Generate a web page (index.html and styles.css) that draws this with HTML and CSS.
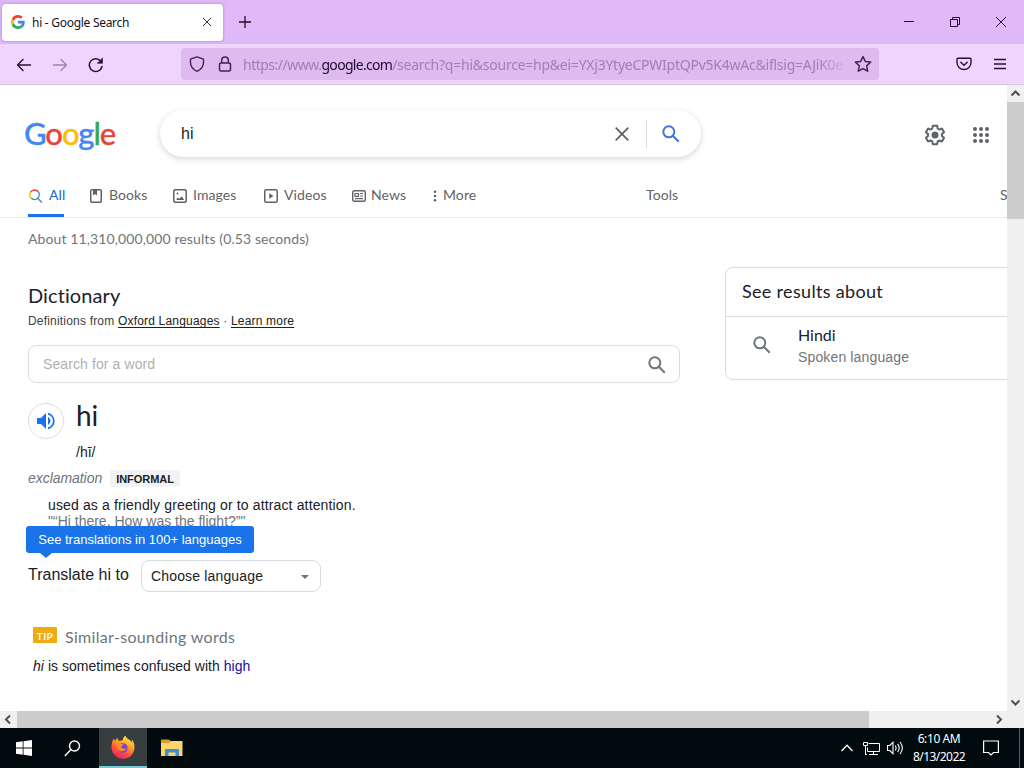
FILE: index.html
```html
<!DOCTYPE html>
<html lang="en">
<head>
<meta charset="utf-8">
<title>hi - Google Search</title>
<link rel="stylesheet" href="styles.css">
</head>
<body>
<div class="screen">
  <div class="tabbar">
    <div class="tab">
      <svg class="favicon" width="14" height="14" viewBox="0 0 48 48"><path fill="#EA4335" d="M24 9.500c3.500 0 6.700 1.200 9.200 3.600l6.900-6.900C35.900 2.400 30.500 0 24 0 14.600 0 6.500 5.400 2.600 13.200l8 6.200C12.400 13.700 17.700 9.500 24 9.500z"/><path fill="#4285F4" d="M47 24.500c0-1.600-.2-3.100-.4-4.500H24v9h12.900c-.6 3-2.200 5.500-4.700 7.200l7.700 6C44.400 38 47 31.800 47 24.500z"/><path fill="#FBBC05" d="M10.500 28.600A14.500 14.500 0 0 1 10.500 19.400l-8-6.200a24 24 0 0 0 0 21.600z"/><path fill="#34A853" d="M24 48c6.500 0 11.900-2.100 15.900-5.800l-7.700-6c-2.200 1.500-4.900 2.300-8.200 2.300-6.300 0-11.600-4.200-13.500-9.900l-8 6.200C6.500 42.600 14.600 48 24 48z"/></svg>
      <span class="tab-title">hi - Google Search</span>
      <svg class="tab-close" width="10" height="10" viewBox="0 0 10 10"><path d="M1 1l8 8M9 1l-8 8" stroke="#333" stroke-width="1"/></svg>
    </div>
    <svg class="new-tab" width="14" height="14" viewBox="0 0 14 14"><path d="M7 1v12M1 7h12" stroke="#1c0f26" stroke-width="1.300"/></svg>
    <div class="window-controls">
      <svg width="12" height="12" viewBox="0 0 12 12"><path d="M1 5.500h10" stroke="#2b0b3b"/></svg>
      <svg width="12" height="12" viewBox="0 0 12 12" fill="none" stroke="#2b0b3b"><path d="M1.500 3.500h7v7h-7zM3.500 3.500v-2h7v7h-2"/></svg>
      <svg width="12" height="12" viewBox="0 0 12 12"><path d="M1 1l10 10M11 1L1 11" stroke="#2b0b3b"/></svg>
    </div>
  </div>
  <div class="toolbar">
    <div class="nav-buttons">
      <svg width="16" height="16" viewBox="0 0 16 16" fill="none" stroke="#2b0d3e" stroke-width="1.400" stroke-linecap="round" stroke-linejoin="round"><path d="M14.500 8h-13M7 2.500L1.500 8 7 13.500"/></svg>
      <svg class="dim" width="16" height="16" viewBox="0 0 16 16" fill="none" stroke="#2b0d3e" stroke-width="1.400" stroke-linecap="round" stroke-linejoin="round"><path d="M1.500 8h13M9 2.500L14.500 8 9 13.500"/></svg>
      <svg width="16" height="16" viewBox="0 0 16 16" fill="none" stroke="#2b0d3e" stroke-width="1.500" stroke-linecap="round"><path d="M14 9.500A6.400 6.400 0 1 1 12.700 4"/><path d="M14.500 1.300v5h-5z" fill="#2b0d3e" stroke-width=".6"/></svg>
    </div>
    <div class="urlbar">
      <svg width="16" height="16" viewBox="0 0 16 16" fill="none" stroke="#47205e" stroke-width="1.400" stroke-linejoin="round"><path d="M8 .8L14.500 3.200v3.300c0 4.300-2.700 7.100-6.500 8.800C4.200 13.600 1.500 10.800 1.500 6.500V3.200z"/></svg>
      <svg class="lock" width="14" height="16" viewBox="0 0 14 16" fill="none" stroke="#47205e" stroke-width="1.500"><rect x="1.500" y="7" width="11" height="8" rx="1.500"/><path d="M3.700 7V4.200a3.300 3.300 0 0 1 6.600 0V7"/></svg>
      <div class="url"><span class="u1">https://www.</span><span class="u2">google.com</span><span class="u3">/search?q=hi&amp;source=hp&amp;ei=YXj3YtyeCPWIptQPv5K4wAc&amp;iflsig=AJiK0e</span></div>
      <svg class="star" width="18" height="18" viewBox="0 0 18 18" fill="none" stroke="#47205e" stroke-width="1.500" stroke-linejoin="round"><path d="M9 1.500l2.300 4.900 5.300.7-3.900 3.700 1 5.400L9 13.600l-4.700 2.600 1-5.400-3.900-3.700 5.300-.7z"/></svg>
    </div>
    <div class="tool-icons">
      <svg width="16" height="14" viewBox="0 0 16 14" fill="none" stroke="#2b0d3e" stroke-width="1.400" stroke-linecap="round" stroke-linejoin="round"><path d="M2 1.200h12a1 1 0 0 1 1 1v3.300a7 7 0 0 1-14 0V2.200a1 1 0 0 1 1-1zM4.800 5.200L8 8.300l3.200-3.100"/></svg>
      <svg width="12" height="12" viewBox="0 0 12 12"><path d="M0 1.500h12M0 6h12M0 10.500h12" stroke="#2b0d3e" stroke-width="1.300"/></svg>
    </div>
  </div>

  <div class="viewport">
    <div class="page">
      <header class="header">
        <div class="logo"><span class="b">G</span><span class="r">o</span><span class="y">o</span><span class="b">g</span><span class="g">l</span><span class="r">e</span></div>
        <div class="searchbox">
          <span class="query">hi</span>
          <svg class="clear" width="14" height="14" viewBox="0 0 14 14"><path d="M.7.7l12.600 12.600M13.300.7L.7 13.300" stroke="#5f6368" stroke-width="1.800"/></svg>
          <span class="divider"></span>
          <svg class="go" width="18" height="18" viewBox="0 0 18 18" fill="none" stroke="#4374dd" stroke-width="2"><circle cx="6.800" cy="6.800" r="5.500"/><path d="M10.800 10.800l6 6"/></svg>
        </div>
        <div class="header-icons">
          <svg width="24" height="24" viewBox="0 0 24 24" fill="#5f6368"><path d="M13.850 22.250h-3.700c-.74 0-1.360-.54-1.450-1.270l-.27-1.890c-.27-.14-.53-.29-.79-.46l-1.800.72c-.7.260-1.470-.03-1.810-.65L2.200 15.530c-.35-.66-.2-1.440.36-1.880l1.530-1.190c-.01-.15-.02-.3-.02-.46 0-.15.010-.31.020-.46l-1.520-1.190c-.59-.45-.74-1.260-.37-1.880l1.850-3.190c.34-.62 1.110-.9 1.790-.63l1.810.73c.26-.17.52-.32.78-.46l.27-1.910c.09-.7.710-1.250 1.440-1.250h3.700c.74 0 1.360.54 1.450 1.270l.27 1.890c.27.14.53.290.79.460l1.800-.72c.71-.26 1.480.03 1.820.65l1.840 3.180c.36.66.2 1.440-.36 1.880l-1.520 1.190c.01.15.020.3.020.46s-.01.31-.02.46l1.520 1.190c.56.450.72 1.230.37 1.860l-1.860 3.220c-.34.62-1.110.9-1.800.63l-1.800-.72c-.26.17-.52.320-.78.460l-.27 1.910c-.1.680-.72 1.220-1.460 1.220zm-3.230-2h2.760l.37-2.550.53-.22c.44-.18.88-.44 1.340-.78l.45-.34 2.380.96 1.380-2.400-2.030-1.580.07-.56c.03-.26.06-.51.060-.78s-.03-.53-.06-.78l-.07-.56 2.030-1.580-1.390-2.400-2.390.96-.45-.35c-.42-.32-.87-.58-1.330-.77l-.52-.22-.37-2.550h-2.760l-.37 2.550-.53.210c-.44.190-.88.440-1.340.79l-.45.330-2.380-.95-1.390 2.390 2.030 1.580-.07.560a7 7 0 0 0-.06.790c0 .260.020.53.060.78l.07.560-2.030 1.580 1.380 2.400 2.390-.96.450.350c.43.330.86.580 1.330.770l.53.220z"/><circle cx="12" cy="12" r="3.500"/></svg>
          <svg width="16" height="16" viewBox="0 0 16 16" fill="#5f6368"><circle cx="2" cy="2" r="2"/><circle cx="8" cy="2" r="2"/><circle cx="14" cy="2" r="2"/><circle cx="2" cy="8" r="2"/><circle cx="8" cy="8" r="2"/><circle cx="14" cy="8" r="2"/><circle cx="2" cy="14" r="2"/><circle cx="8" cy="14" r="2"/><circle cx="14" cy="14" r="2"/></svg>
        </div>
      </header>

      <nav class="tabs">
        <a class="item all"><svg width="14" height="14" viewBox="0 0 14 14" fill="none" stroke-width="1.400"><path d="M1.600 3.200A4.700 4.700 0 0 1 9.300 2.800" stroke="#ea4335"/><path d="M1.600 3.200A4.700 4.700 0 0 0 2.200 9.100" stroke="#fbbc04"/><path d="M2.200 9.100A4.700 4.700 0 0 0 8.600 9.300" stroke="#34a853"/><path d="M9.300 2.800A4.700 4.700 0 0 1 8.600 9.300L13 13.500" stroke="#4285f4"/></svg><span>All</span></a>
        <a class="item books"><svg width="12" height="14" viewBox="0 0 12 14" fill="none" stroke="#5f6368" stroke-width="1.500"><rect x=".75" y=".75" width="10.500" height="12.500" rx="1"/><path d="M3 1h4v5.500L5 5 3 6.500z" fill="#5f6368" stroke="none"/></svg><span>Books</span></a>
        <a class="item images"><svg width="14" height="14" viewBox="0 0 14 14" fill="none" stroke="#5f6368" stroke-width="1.500"><rect x=".75" y=".75" width="12.500" height="12.500" rx="1.500"/><path d="M3 11l2-2.500 1.500 1.300L8.700 7.300 11.200 11z" fill="#5f6368" stroke="none"/><circle cx="4.500" cy="4.500" r="1" fill="#5f6368" stroke="none"/></svg><span>Images</span></a>
        <a class="item videos"><svg width="14" height="14" viewBox="0 0 14 14" fill="none" stroke="#5f6368" stroke-width="1.500"><rect x=".75" y=".75" width="12.500" height="12.500" rx="1.500"/><path d="M5.200 4.300L9.500 7l-4.300 2.700z" fill="#5f6368" stroke="none"/></svg><span>Videos</span></a>
        <a class="item news"><svg width="14" height="12" viewBox="0 0 14 12" fill="none" stroke="#5f6368" stroke-width="1.400"><rect x=".7" y=".7" width="12.600" height="10.600" rx="1.500"/><path d="M3 3.500h3.500v2.800H3zM8 3.500h3M8 6h3M3 8.700h8" stroke-width="1.200"/></svg><span>News</span></a>
        <a class="item more"><svg width="4" height="12" viewBox="0 0 4 12" fill="#5f6368"><circle cx="2" cy="1.700" r="1.300"/><circle cx="2" cy="6" r="1.300"/><circle cx="2" cy="10.300" r="1.300"/></svg><span>More</span></a>
        <a class="item tools"><span>Tools</span></a>
        <a class="item safe"><span>S</span></a>
      </nav>

      <div class="stats"><span>About 11,310,000,000 results (0.53 seconds)</span></div>

      <main class="columns">
        <section class="dictionary">
          <h2>Dictionary</h2>
          <p class="source">Definitions from <u>Oxford Languages</u> · <u>Learn more</u></p>
          <div class="wordbox"><span>Search for a word</span>
            <svg width="18" height="18" viewBox="0 0 18 18" fill="none" stroke="#70757a" stroke-width="2"><circle cx="6.800" cy="6.800" r="5.500"/><path d="M10.800 10.800l6 6"/></svg>
          </div>
          <div class="headword">
            <div class="speaker"><svg width="18" height="18" viewBox="0 0 18 18" fill="#1a73e8"><path d="M0 6v6h4l5 5V1L4 6zM13.500 9A4.500 4.500 0 0 0 11 5v8a4.500 4.500 0 0 0 2.500-4zM11 .7v2a6.500 6.500 0 0 1 0 12.600v2A8.500 8.500 0 0 0 11 .7z"/></svg></div>
            <div class="word"><span class="term">hi</span><span class="phon">/hī/</span></div>
          </div>
          <div class="pos"><i>exclamation</i><b>INFORMAL</b></div>
          <div class="definition"><div class="meaning">used as a friendly greeting or to attract attention.</div><div class="example">"“Hi there. How was the flight?”"</div></div>
          <div class="translate">
            <div class="tooltip">See translations in 100+ languages</div>
            <span class="label">Translate hi to</span>
            <div class="select"><span>Choose language</span><i class="caret"></i></div>
          </div>
          <div class="tip"><span class="badge">TIP</span><span class="tip-title">Similar-sounding words</span></div>
          <p class="confused"><i>hi</i> is sometimes confused with <a>high</a></p>
        </section>
        <aside class="about">
          <h3>See results about</h3>
          <div class="entity">
            <svg width="18" height="18" viewBox="0 0 18 18" fill="none" stroke="#70757a" stroke-width="2"><circle cx="6.800" cy="6.800" r="5.500"/><path d="M10.800 10.800l6 6"/></svg>
            <div><div class="name">Hindi</div><div class="kind">Spoken language</div></div>
          </div>
        </aside>
      </main>
    </div>
    <div class="vscroll">
      <svg width="17" height="17" viewBox="0 0 17 17" fill="none" stroke="#505050" stroke-width="2"><path d="M4.500 10.500l4-4 4 4"/></svg>
      <div class="vthumb"></div>
      <svg class="down" width="17" height="17" viewBox="0 0 17 17" fill="none" stroke="#505050" stroke-width="2"><path d="M4.500 6.500l4 4 4-4"/></svg>
    </div>
  </div>
  <div class="hscroll">
    <svg width="17" height="17" viewBox="0 0 17 17" fill="none" stroke="#505050" stroke-width="2"><path d="M10 4.500l-4 4 4 4"/></svg>
    <div class="hthumb"></div>
    <svg class="right" width="17" height="17" viewBox="0 0 17 17" fill="none" stroke="#505050" stroke-width="2"><path d="M7 4.500l4 4-4 4"/></svg>
  </div>

  <div class="taskbar">
    <div class="task"><svg width="16" height="16" viewBox="0 0 16 16" fill="#fff"><path d="M0 2.300L6.700 1.300v6.300H0zM7.500 1.200L16 0v7.600H7.500zM0 8.400h6.700v6.300L0 13.700zM7.500 8.400H16V16l-8.500-1.200z"/></svg></div>
    <div class="task"><svg width="17" height="17" viewBox="0 0 17 17" fill="none" stroke="#fff" stroke-width="1.400"><circle cx="10.500" cy="6" r="5"/><path d="M7 9.500L.8 16"/></svg></div>
    <div class="task active">
      <svg width="24" height="24" viewBox="0 0 24 24"><defs><linearGradient id="fox" x1=".8" y1="0" x2=".3" y2="1"><stop offset="0" stop-color="#fff04a"/><stop offset=".35" stop-color="#ffad26"/><stop offset=".65" stop-color="#ff5a35"/><stop offset="1" stop-color="#ef1d69"/></linearGradient></defs><path fill="url(#fox)" d="M14.500.5c-2.200 1.300-2.700 3.600-2.800 4.700-1.200 0-2.300.2-3.300.7C7 5 6.500 3.700 6.700 2.800c-1.300.8-2 2-2.300 2.800C3 5.500 3 3.800 3 3.300 1.200 5.500.5 8.500.5 12a11.500 11.500 0 0 0 23 .6c.2-3.600-1.200-6.500-2.900-8l.6 3.300C19.800 4.200 15 4.200 14.500.5z"/><circle cx="11.800" cy="13" r="4.800" fill="#7543d6"/><path fill="#ff8a2a" d="M5 8c2-1 4-.3 5 .9 1 .2 2.200.1 2.500.5 0 1.100-1.700 1.600-2.400 2.200.2 1.900 2.400 2.700 5.400 1.500-1 3.200-5.200 4.400-8 2C5.200 13.300 4.700 10.500 5 8z"/></svg>
    </div>
    <div class="task folder"><svg width="22" height="20" viewBox="0 0 22 20"><path fill="#dc9c22" d="M0 1.500h8l2 2h11V8H0z"/><path fill="#fbd66c" d="M0 5h8l2-2h11.500v15H0z"/><path fill="#3f91cc" d="M4 18v-6q0-1 1-1h12q1 0 1 1v6h-3.500v-3.500h-7V18z"/></svg></div>
    <div class="tray">
      <svg class="t1" width="12" height="8" viewBox="0 0 12 8" fill="none" stroke="#fff" stroke-width="1.300"><path d="M.5 7L6 1.200 11.500 7"/></svg>
      <svg class="t2" width="17" height="15" viewBox="0 0 17 15" fill="none" stroke="#fff"><path d="M5.500 2.500h11v8h-12v-4M10.500 10.500v3M6 13.500h9M.5 1.500h4v3h-4zM2.500 5v9M2 13.500h2"/></svg>
      <svg class="t3" width="17" height="14" viewBox="0 0 17 14" fill="none" stroke="#fff" stroke-width="1.100"><path d="M.5 4.500h2.300L6 1.300v11.400L2.800 9.500H.5zM8.200 4.500q1.800 2.500 0 5M10.600 2.800q3.200 4.200 0 8.400M13 1q4.800 6 0 12"/></svg>
      <div class="clock"><span>6:10 AM</span><span class="date">8/13/2022</span></div>
      <svg class="t4" width="16" height="16" viewBox="0 0 16 16" fill="none" stroke="#fff" stroke-width="1.200"><path d="M.6 1h14.800v11.500H10.500L8 15l-2.500-2.500H.6z"/></svg>
      <div class="peek"></div>
    </div>
  </div>
</div>
</body>
</html>
```
FILE: styles.css
```css
* { box-sizing: border-box; }
body { margin: 0; font-family: "Liberation Sans", Arial, sans-serif; color: #202124; }
h2, h3, p { margin: 0; font-weight: 400; }
svg { display: block; flex: none; }
span, div { white-space: nowrap; }
.screen { width: 1024px; height: 768px; overflow: hidden; display: flex; flex-direction: column; background: #fff; }

.tabbar { height: 44px; flex: none; display: flex; align-items: center; background: linear-gradient(#e1b9f6 60%, #dcb9fa); }
.tab { width: 221px; height: 37px; margin-left: 2px; background: #fff; border-radius: 4px; box-shadow: 0 0 3px #8a5caa99; display: flex; align-items: center; padding: 0 11px 0 9px; }
.tab-title { font: 12px "Noto Sans", sans-serif; margin-left: 7px; letter-spacing: -.28px; color: #15141a; }
.tab-close { margin-left: auto; }
.new-tab { margin-left: 15px; }
.window-controls { margin-left: auto; margin-right: 17px; display: flex; gap: 34px; }

.toolbar { height: 41px; flex: none; display: flex; align-items: center; background: #efd5fb; border-bottom: 1px solid #d9c3e2; }
.nav-buttons { display: flex; gap: 20px; margin-left: 16px; padding-top: 1px; width: 165px; }
.dim { opacity: .4; }
.urlbar { width: 698px; height: 32px; background: #debaf1; border-radius: 4px; display: flex; align-items: center; padding: 0 7px 0 8px; }
.lock { margin-left: 13px; }
.url { width: 606px; margin: 2px 0 0 11px; overflow: hidden; font: 14px/20px "Noto Sans", sans-serif; color: #a07fb2; -webkit-mask-image: linear-gradient(90deg, #000 95%, transparent); mask-image: linear-gradient(90deg, #000 95%, transparent); }
.u1 { letter-spacing: -.5px; }
.u2 { letter-spacing: -.7px; color: #1f0a2e; }
.u3 { letter-spacing: -.24px; }
.star { margin-left: auto; }
.tool-icons { display: flex; align-items: center; gap: 22px; margin-left: auto; margin-right: 18px; }

.viewport { height: 626px; flex: none; display: flex; }
.page { width: 1007px; overflow: hidden; }
.header { height: 88px; display: flex; align-items: flex-start; padding-top: 25px; }
.logo { width: 136px; margin: -1px 0 0 24px; font: 500 31px/48px Lato, sans-serif; letter-spacing: -1.1px; -webkit-text-stroke: .3px; }
.b { color: #4285f4; } .r { color: #ea4335; } .y { color: #fbbc05; } .g { color: #34a853; }
.searchbox { width: 541px; height: 47px; border-radius: 24px; box-shadow: 0 2px 5px 1px rgba(64,60,67,.16); display: flex; align-items: center; padding: 0 21px 0 21px; }
.query { font-size: 16px; }
.clear { margin-left: auto; }
.divider { width: 1px; height: 28px; background: #dadce0; margin: 0 15px 0 17px; }
.header-icons { display: flex; align-items: center; gap: 26px; margin-left: auto; margin-right: 18px; height: 50px; }

.tabs { height: 45px; display: flex; border-bottom: 1px solid #ebebeb; padding-left: 28px; font: 14px/20px Lato, sans-serif; color: #5f6368; }
.item { display: flex; align-items: center; gap: 7px; flex: none; letter-spacing: .08px; }
.item span { padding-bottom: 1px; }
.item svg { margin-top: 2px; }
.all { width: 36px; color: #1967d2; border-bottom: 3px solid #1a73e8; padding-top: 3px; gap: 6px; }
.all svg { margin-left: 1px; }
.books { margin-left: 26px; width: 83px; }
.images { width: 91px; gap: 6px; }
.videos { width: 88px; gap: 6px; }
.news { width: 80px; gap: 5px; }
.more { width: 214px; gap: 7px; padding-left: 1px; }
.more svg { margin-left: 0; margin-right: -1px; }
.tools { width: 354px; }

.stats { height: 49px; padding: 12px 0 0 28px; font: 14px/17px Lato, sans-serif; letter-spacing: .11px; color: #70757a; }
.columns { display: flex; align-items: flex-start; }
.dictionary { width: 652px; flex: none; margin-left: 28px; }
h2 { font: 20px/26px Lato, sans-serif; letter-spacing: .1px; margin-top: 15px; }
.source { font-size: 12px; line-height: 16px; letter-spacing: .19px; margin-top: 5px; color: #3c4043; }
.source u { color: #202124; text-underline-offset: 2px; }
.wordbox { margin-top: 16px; height: 38px; border: 1px solid #dadce0; border-radius: 8px; display: flex; align-items: center; justify-content: space-between; padding: 0 13px 0 14px; font-size: 14px; letter-spacing: .1px; color: #b0b0b0; }
.wordbox svg { margin-top: 1px; }
.headword { display: flex; padding-top: 20px; height: 86px; }
.speaker { width: 36px; height: 36px; border: 1px solid #dadce0; border-radius: 50%; display: flex; align-items: center; justify-content: center; }
.word { margin-left: 12px; display: flex; flex-direction: column; }
.term { font: 28px/28px Lato, sans-serif; margin-top: -2px; }
.phon { font-size: 14px; line-height: 16px; margin-top: 15px; }
.pos { display: flex; align-items: center; height: 18px; font-size: 14px; color: #70757a; }
.pos i { letter-spacing: -.05px; }
.pos b { font-size: 11px; line-height: 16px; letter-spacing: -.05px; color: #202124; background: #f1f3f4; border-radius: 2px; padding: 1px 6px 0; margin: 1px 0 0 8px; }
.definition { padding: 10px 0 0 20px; font-size: 14px; line-height: 16px; height: 73px; }
.meaning { letter-spacing: .14px; }
.example { color: #70757a; }
.translate { position: relative; display: flex; align-items: center; height: 32px; }
.tooltip { position: absolute; left: -2px; top: -34px; width: 228px; height: 27px; background: #1a73e8; color: #fff; border-radius: 3px; font-size: 13px; line-height: 27px; text-align: center; }
.tooltip::after { content: ""; position: absolute; left: 14px; top: 27px; border: 6px solid transparent; border-top: 5px solid #1a73e8; border-bottom: 0; }
.label { font-size: 16px; width: 113px; margin-top: -3px; }
.select { width: 180px; height: 32px; border: 1px solid #dadce0; border-radius: 8px; display: flex; align-items: center; justify-content: space-between; padding: 0 11px 0 9px; font-size: 14px; letter-spacing: .16px; }
.caret { border: 4px solid transparent; border-top: 4px solid #70757a; border-bottom: 0; margin-top: 1px; }
.tip { display: flex; align-items: center; height: 20px; margin: 35px 0 0 5px; color: #70757a; }
.badge { width: 24px; height: 16px; margin-top: -4px; background: #f2aa13; border-radius: 1px; color: #fff; font: 700 10px/18px Lato, sans-serif; letter-spacing: .4px; text-align: center; }
.tip-title { font: 16px/20px Lato, sans-serif; letter-spacing: .32px; margin-left: 8px; }
.confused { font-size: 14px; line-height: 18px; letter-spacing: .03px; margin: 10px 0 0 5px; }
.confused a { color: #1a0dab; }
.about { width: 300px; flex: none; height: 113px; margin-left: 45px; border: 1px solid #dadce0; border-radius: 8px; }
h3 { height: 49px; border-bottom: 1px solid #dadce0; padding-left: 16px; font: 18px/47px Lato, sans-serif; letter-spacing: .32px; }
.entity { display: flex; padding: 8px 0 0 27px; }
.entity svg { margin: 11px 27px 0 0; }
.name { font: 16px/20px Lato, sans-serif; }
.kind { font: 14px/24px "Liberation Sans", sans-serif; letter-spacing: .14px; color: #70757a; }

.vscroll { width: 17px; background: #f0f0f0; display: flex; flex-direction: column; }
.vthumb { height: 117px; background: #cdcdcd; }
.down { margin-top: auto; }
.hscroll { height: 17px; flex: none; background: #f0f0f0; display: flex; }
.hthumb { width: 852px; background: #cdcdcd; }
.right { margin-left: auto; margin-right: 17px; }

.taskbar { height: 40px; flex: none; display: flex; background: #010b0d; }
.task { width: 48px; display: flex; align-items: center; justify-content: center; }
.active { margin-left: 3px; background: #373e40; border-bottom: 2px solid #76c9d8; }
.folder { width: 50px; }
.tray { flex: 1; display: flex; align-items: center; color: #fff; }
.t1 { margin-left: auto; }
.t2 { margin-left: 10px; }
.t3 { margin-left: 7px; }
.clock { width: 54px; margin-left: 8px; display: flex; flex-direction: column; align-items: center; font: 12px/18px "Noto Sans", sans-serif; letter-spacing: -.4px; }
.date { letter-spacing: -.55px; }
.t4 { margin-left: 17px; }
.peek { width: 1px; height: 40px; background: #596164; margin: 0 4px 0 20px; }
```
